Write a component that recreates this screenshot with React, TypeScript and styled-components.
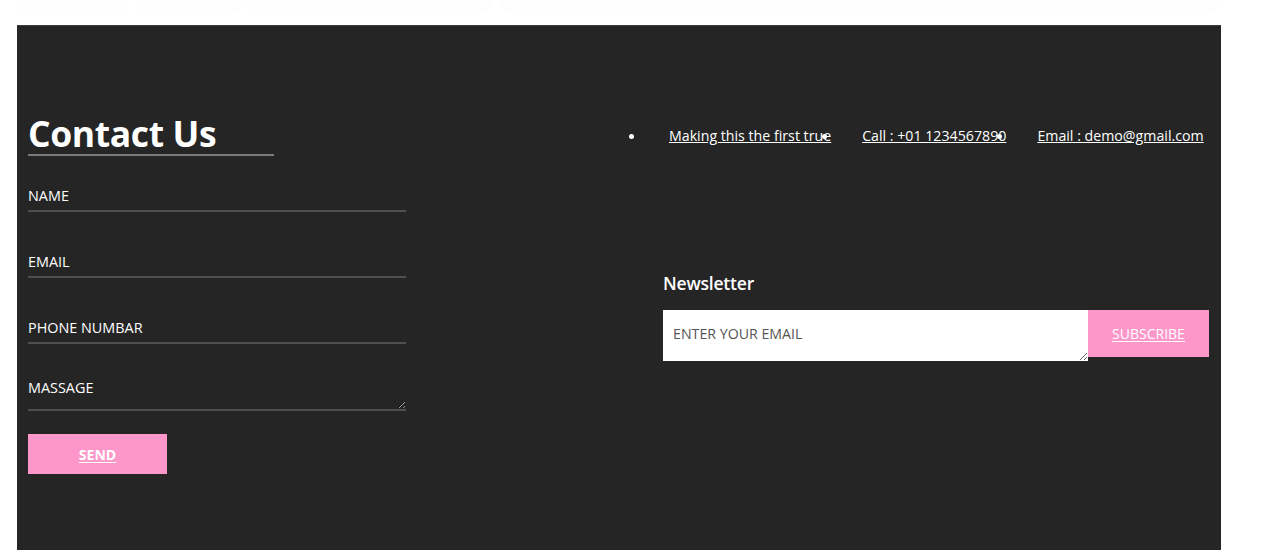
import React from "react";
import styled, { createGlobalStyle } from "styled-components";

const Global = createGlobalStyle`
  html, body { margin: 0; padding: 0; background: #ffffff; }
  body { font-family: "Open Sans", "Noto Sans", sans-serif; }
  * { box-sizing: border-box; }
`;

const TopStrip = styled.div`
  height: 25px;
  display: flex;
  gap: 10px;
  padding: 0 60px 0 16px;
  align-items: flex-start;
`;

const GhostCard = styled.div<{ $w: number }>`
  width: ${(p) => p.$w}px;
  height: 11px;
  border-radius: 0 0 10px 10px;
  background: #fefefe;
  box-shadow: 0 1px 2px rgba(0, 0, 0, 0.02);
`;

const Footer = styled.footer`
  margin-left: 17px;
  width: 1204px;
  height: 525px;
  background: #252525;
  border-top: 1px solid #3c3c3c;
  display: grid;
  grid-template-columns: 592px 1fr;
  padding: 0 12px 0 11px;
  color: #ffffff;
`;

const LeftCol = styled.div`
  display: flex;
  flex-direction: column;
  align-items: flex-start;
  padding-top: 86px;
`;

const Heading = styled.h1`
  margin: 0;
  width: 246px;
  font-size: 35.5px;
  font-weight: 700;
  line-height: 42px;
  letter-spacing: -0.4px;
  border-bottom: 2px solid #7a7a7a;
  color: #ffffff;
`;

const Field = styled.input`
  width: 378px;
  height: 31px;
  margin-top: 25px;
  padding: 0;
  background: transparent;
  border: none;
  border-bottom: 2px solid #4e4e4e;
  color: #ffffff;
  font-family: "Open Sans", sans-serif;
  font-size: 14.4px;
  outline: none;
  & + & { margin-top: 35px; }
  &::placeholder { color: #ffffff; opacity: 1; }
`;

const Message = styled.textarea`
  width: 378px;
  height: 32px;
  margin-top: 35px;
  padding: 0;
  background: transparent;
  border: none;
  border-bottom: 2px solid #4e4e4e;
  color: #ffffff;
  font-family: "Open Sans", sans-serif;
  font-size: 14.4px;
  line-height: 18px;
  outline: none;
  display: block;
  &::placeholder { color: #ffffff; opacity: 1; }
`;

const SendButton = styled.button`
  margin-top: 23px;
  width: 139px;
  height: 40px;
  border: none;
  background: #fe97c9;
  color: #ffffff;
  font-family: "Open Sans", sans-serif;
  font-weight: 700;
  font-size: 14px;
  text-decoration: underline;
  text-underline-offset: 2px;
  cursor: pointer;
`;

const RightCol = styled.div`
  display: flex;
  flex-direction: column;
  padding-top: 100px;
`;

const LinkList = styled.ul`
  display: flex;
  margin: 0;
  padding: 0 0 0 18px;
  list-style: none;
  justify-content: flex-start;
`;

const LinkItem = styled.li`
  padding-left: 31px;
  font-size: 14.2px;
  line-height: 20px;
  white-space: nowrap;
  &::before {
    content: "";
    display: inline-block;
    width: 5px;
    height: 5px;
    border-radius: 50%;
    background: #ffffff;
    margin-left: -40px;
    margin-right: 35px;
    vertical-align: 2px;
  }
`;

const Link = styled.a`
  color: #ffffff;
  text-decoration: underline;
`;

const Newsletter = styled.div`
  margin-top: 125px;
  padding-left: 43px;
  display: flex;
  flex-direction: column;
`;

const NewsTitle = styled.h3`
  margin: 0;
  font-size: 17.5px;
  font-weight: 600;
  line-height: 24px;
  letter-spacing: -0.2px;
`;

const NewsRow = styled.div`
  margin-top: 15px;
  display: flex;
  align-items: flex-start;
`;

const EmailBox = styled.textarea`
  width: 425px;
  height: 51px;
  border: none;
  margin: 0;
  background: #ffffff;
  padding: 14px 10px;
  font-family: "Open Sans", sans-serif;
  font-size: 14.2px;
  line-height: 20px;
  color: #444;
  outline: none;
  display: block;
  &::placeholder { color: #555555; opacity: 1; }
`;

const SubscribeButton = styled.button`
  width: 121px;
  height: 47px;
  border: none;
  background: #fe97c9;
  color: #ffffff;
  font-family: "Open Sans", sans-serif;
  font-size: 14px;
  text-decoration: underline;
  text-underline-offset: 2px;
  cursor: pointer;
`;

export default function App() {
  return (
    <>
      <Global />
      <TopStrip>
        <GhostCard $w={110} />
        <GhostCard $w={105} />
        <GhostCard $w={240} />
        <GhostCard $w={720} />
      </TopStrip>
      <Footer>
        <LeftCol>
          <Heading>Contact Us</Heading>
          <Field placeholder="NAME" />
          <Field placeholder="EMAIL" />
          <Field placeholder="PHONE NUMBAR" />
          <Message placeholder="MASSAGE" />
          <SendButton>SEND</SendButton>
        </LeftCol>
        <RightCol>
          <LinkList>
            <LinkItem>
              <Link href="#">Making this the first true</Link>
            </LinkItem>
            <LinkItem>
              <Link href="#">Call : +01 1234567890</Link>
            </LinkItem>
            <LinkItem>
              <Link href="#">Email : demo@gmail.com</Link>
            </LinkItem>
          </LinkList>
          <Newsletter>
            <NewsTitle>Newsletter</NewsTitle>
            <NewsRow>
              <EmailBox placeholder="ENTER YOUR EMAIL" />
              <SubscribeButton>SUBSCRIBE</SubscribeButton>
            </NewsRow>
          </Newsletter>
        </RightCol>
      </Footer>
    </>
  );
}
